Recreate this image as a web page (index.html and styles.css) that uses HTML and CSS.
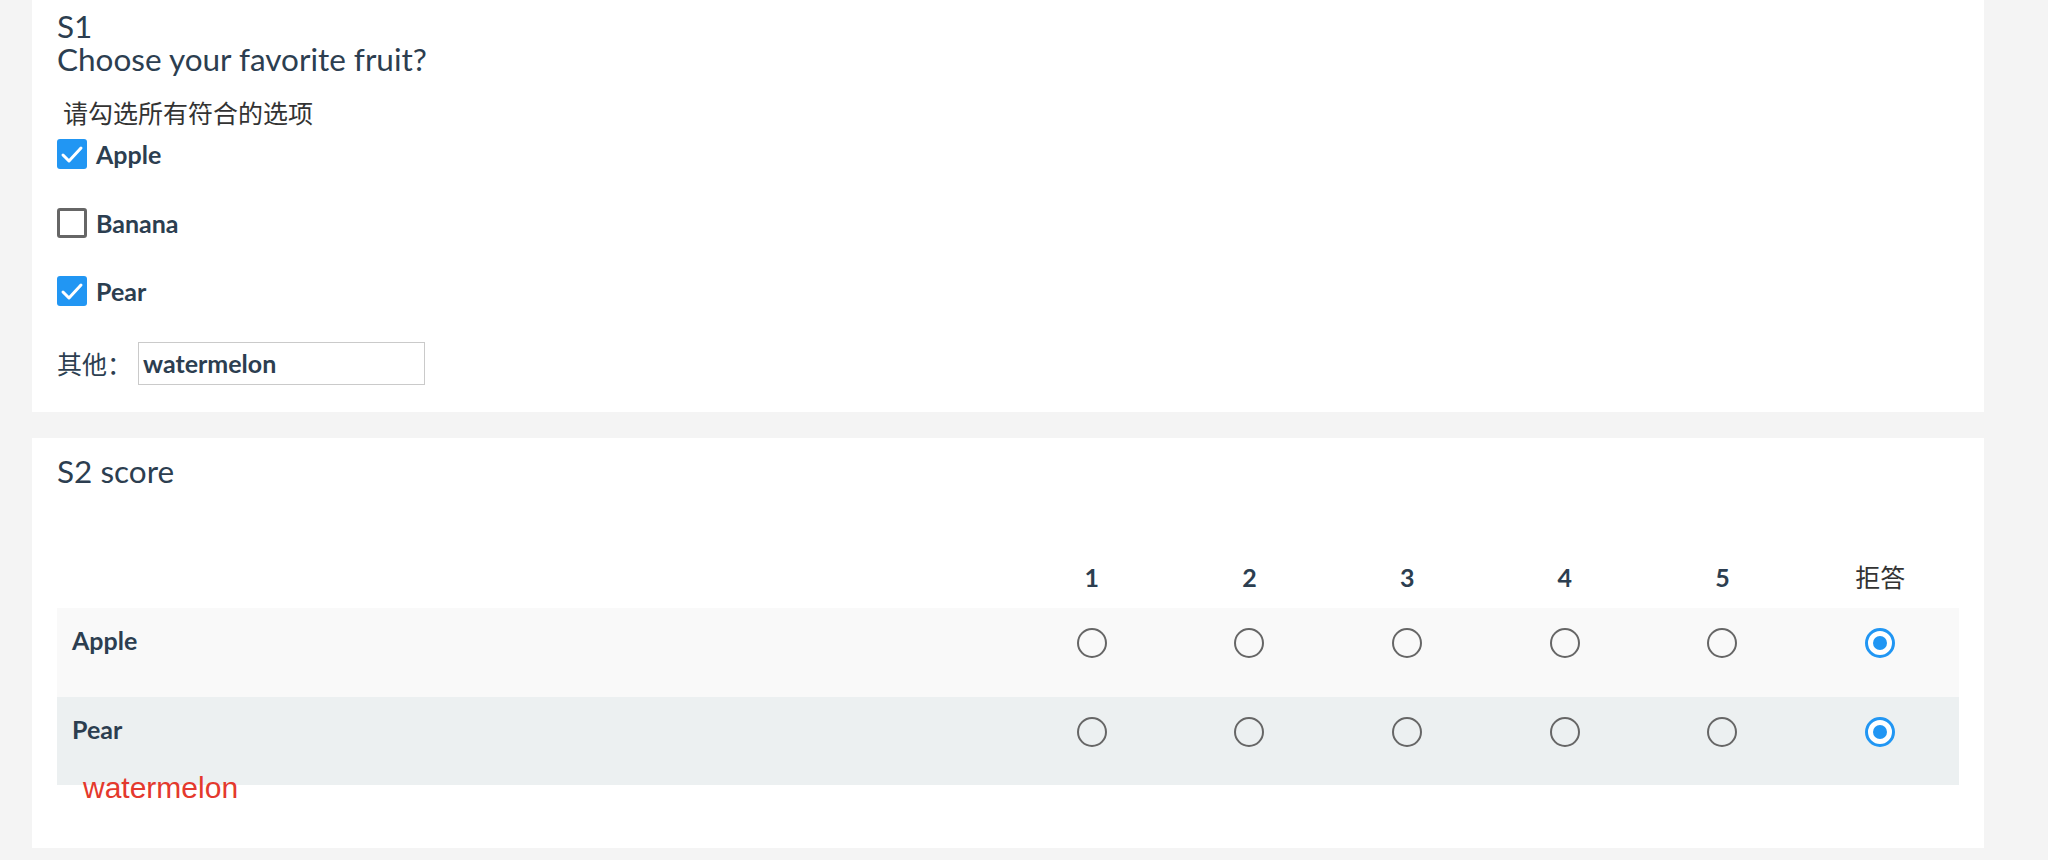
FILE: index.html
```html
<!DOCTYPE html>
<html lang="zh-CN">
<head>
<meta charset="utf-8">
<title>Survey</title>
<link rel="stylesheet" href="styles.css">
</head>
<body>
<div class="page">
  <section class="card card-s1">
    <h2 class="q-title"><span class="q-line">S1</span><span class="q-line">Choose your favorite fruit?</span></h2>
    <p class="q-hint">请勾选所有符合的选项</p>
    <ul class="options">
      <li class="option">
        <span class="checkbox checked"><svg viewBox="0 0 30 30" width="30" height="30"><rect x="0" y="0" width="30" height="30" rx="3" fill="#2196f3"/><path d="M6 16 L12 22 L24 9" fill="none" stroke="#fff" stroke-width="3" stroke-linecap="round" stroke-linejoin="round"/></svg></span>
        <span class="opt-label">Apple</span>
      </li>
      <li class="option">
        <span class="checkbox"></span>
        <span class="opt-label">Banana</span>
      </li>
      <li class="option">
        <span class="checkbox checked"><svg viewBox="0 0 30 30" width="30" height="30"><rect x="0" y="0" width="30" height="30" rx="3" fill="#2196f3"/><path d="M6 16 L12 22 L24 9" fill="none" stroke="#fff" stroke-width="3" stroke-linecap="round" stroke-linejoin="round"/></svg></span>
        <span class="opt-label">Pear</span>
      </li>
    </ul>
    <div class="other">
      <span class="other-label">其他：</span>
      <span class="other-input">watermelon</span>
    </div>
  </section>

  <section class="card card-s2">
    <h2 class="q-title">S2 score</h2>
    <div class="matrix">
      <div class="m-row m-head">
        <div class="m-cell m-label"></div>
        <div class="m-cell">1</div>
        <div class="m-cell">2</div>
        <div class="m-cell">3</div>
        <div class="m-cell">4</div>
        <div class="m-cell">5</div>
        <div class="m-cell m-refuse">拒答</div>
      </div>
      <div class="m-row m-odd">
        <div class="m-cell m-label">Apple</div>
        <div class="m-cell m-opt"><span class="radio"></span></div>
        <div class="m-cell m-opt"><span class="radio"></span></div>
        <div class="m-cell m-opt"><span class="radio"></span></div>
        <div class="m-cell m-opt"><span class="radio"></span></div>
        <div class="m-cell m-opt"><span class="radio"></span></div>
        <div class="m-cell m-opt"><span class="radio checked"><span class="dot"></span></span></div>
      </div>
      <div class="m-row m-even">
        <div class="m-cell m-label">Pear<span class="other-note">watermelon</span></div>
        <div class="m-cell m-opt"><span class="radio"></span></div>
        <div class="m-cell m-opt"><span class="radio"></span></div>
        <div class="m-cell m-opt"><span class="radio"></span></div>
        <div class="m-cell m-opt"><span class="radio"></span></div>
        <div class="m-cell m-opt"><span class="radio"></span></div>
        <div class="m-cell m-opt"><span class="radio checked"><span class="dot"></span></span></div>
      </div>
    </div>
  </section>
</div>
</body>
</html>
```

FILE: styles.css
```css
* {
  box-sizing: border-box;
}

body {
  margin: 0;
  background: #f4f4f4;
  font-family: Lato, "Noto Sans CJK SC", sans-serif;
  color: #2c3e50;
}

.page {
  padding: 0 64px 11px 32px;
}

.card {
  background: #fff;
}

.card + .card {
  margin-top: 26px;
}

.card-s1 {
  padding: 10px 25px 27px;
}

.card-s2 {
  padding: 16px 25px 63px;
}

.q-title {
  margin: 0;
  font-size: 31.5px;
  line-height: 33px;
  font-weight: 400;
  color: #2c3e50;
}

.q-line {
  display: block;
}

.card-s2 .q-title {
  line-height: 34px;
}

.q-hint {
  margin: 22px 0 0;
  padding-left: 6px;
  font-size: 25px;
  line-height: 30px;
  color: #333;
}

.options {
  list-style: none;
  margin: 11px 0 0;
  padding: 0;
  display: flex;
  flex-direction: column;
  gap: 38.5px;
}

.option {
  display: flex;
  align-items: center;
  gap: 9px;
  height: 30px;
}

.checkbox {
  width: 30px;
  height: 30px;
  flex: none;
  border: 3px solid #666;
  border-radius: 3px;
  background: #fff;
  display: block;
}

.checkbox.checked {
  border: none;
}

.checkbox svg {
  display: block;
}

.opt-label {
  font-size: 25px;
  line-height: 30px;
  font-weight: 700;
  color: #2c3e50;
}

.other {
  margin-top: 36px;
  display: flex;
  align-items: center;
  gap: 6px;
}

.other-label {
  font-size: 25px;
  line-height: 30px;
  color: #2c3e50;
}

.other-input {
  width: 287px;
  height: 43px;
  border: 1px solid #cacaca;
  padding-left: 4px;
  font-size: 25px;
  line-height: 41px;
  font-weight: 700;
  color: #2c3e50;
}

.matrix {
  display: flex;
  flex-direction: column;
}

.m-row {
  display: grid;
  grid-template-columns: 956px repeat(6, 1fr);
}

.m-cell {
  font-size: 25px;
  line-height: 30px;
}

.m-head .m-cell {
  padding: 74px 0 16px;
  text-align: center;
  font-weight: 700;
}

.m-head .m-refuse {
  font-weight: 400;
  color: #333;
}

.m-odd {
  background: #f9f9f9;
}

.m-even {
  background: #ecf0f1;
}

.m-label {
  padding: 17px 15px 41.5px;
  font-weight: 700;
  position: relative;
}

.m-opt {
  padding-top: 20px;
  display: flex;
  justify-content: center;
  align-items: flex-start;
}

.radio {
  width: 30px;
  height: 30px;
  border: 2.75px solid #666;
  border-radius: 50%;
  background: transparent;
  display: flex;
  align-items: center;
  justify-content: center;
}

.radio.checked {
  border: 3px solid #2196f3;
  background: #fff;
}

.dot {
  width: 14px;
  height: 14px;
  border-radius: 50%;
  background: #2196f3;
}

.other-note {
  position: absolute;
  left: 26px;
  top: 74px;
  font-family: "Liberation Sans", Arial, sans-serif;
  font-weight: 400;
  font-size: 30px;
  line-height: 34px;
  color: #e4392d;
  white-space: nowrap;
}
```
